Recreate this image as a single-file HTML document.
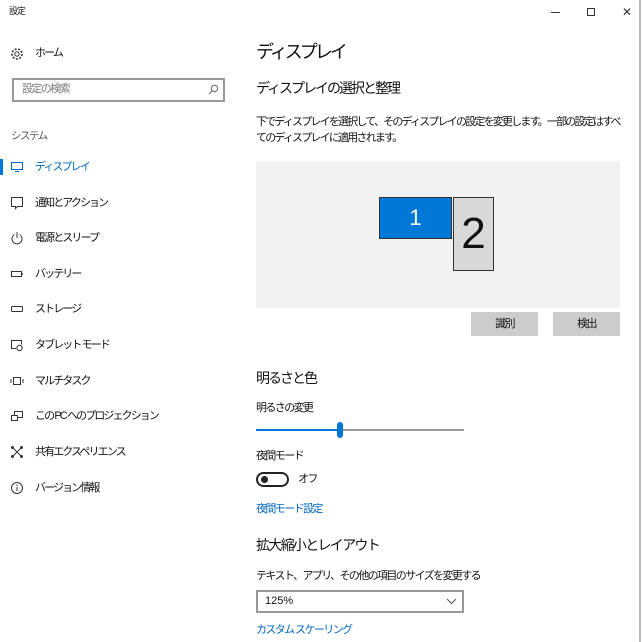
<!DOCTYPE html>
<html><head><meta charset="utf-8"><style>
*{margin:0;padding:0;box-sizing:border-box}
body{width:642px;height:642px;background:#fff;position:relative;overflow:hidden;font-family:"Liberation Sans","Noto Sans CJK JP",sans-serif;color:#111}
.a{position:absolute;white-space:nowrap;line-height:1}
.nav{font-size:11px;left:35px;letter-spacing:-1.9px}
.b{font-size:11px;letter-spacing:-1.6px}
.ic{position:absolute;left:10px;width:14px;height:14px}
.blue{color:#0067c0}
</style></head><body>
<div class="a" style="left:9px;top:7px;font-size:9px;letter-spacing:-1px">設定</div>
<div class="a" style="left:551px;top:12px;width:9px;border-top:1px solid #333"></div>
<div class="a" style="left:587px;top:8px;width:8px;height:8px;border:1px solid #333"></div>
<div class="a" style="left:622px;top:6px;font-size:12px;color:#333">✕</div>
<div class="a" style="left:639px;top:0;width:2px;height:642px;background:#bbb"></div>

<svg class="ic" style="top:47px" viewBox="0 0 14 14"><circle cx="7" cy="7" r="2.2" fill="none" stroke="#333"/><circle cx="7" cy="7" r="5" fill="none" stroke="#333" stroke-dasharray="2 1.5" stroke-width="1.6"/></svg>
<div class="a nav" style="top:48px">ホーム</div>
<div class="a" style="left:12px;top:78px;width:213px;height:24px;border:2px solid #999"></div>
<div class="a b" style="left:22px;top:84px;color:#777">設定の検索</div>
<svg class="a" style="left:208px;top:84px" width="11" height="11" viewBox="0 0 11 11"><circle cx="6.5" cy="4.5" r="3.2" fill="none" stroke="#666"/><line x1="4.2" y1="6.8" x2="1" y2="10" stroke="#666"/></svg>
<div class="a" style="left:11px;top:131px;font-size:10.5px;color:#555;letter-spacing:-1.5px">システム</div>
<div class="a" style="left:0;top:159px;width:3px;height:16px;background:#0078d7"></div>
<svg class="ic" style="top:160px" viewBox="0 0 14 14"><rect x="1.5" y="2.5" width="11" height="7" fill="none" stroke="#0067c0"/><line x1="5" y1="11.5" x2="9" y2="11.5" stroke="#0067c0"/></svg>
<div class="a nav blue" style="top:162px">ディスプレイ</div>
<svg class="ic" style="top:196px" viewBox="0 0 14 14"><path d="M1.5 1.5h11v9h-5l-2 2v-2h-4z" fill="none" stroke="#333"/></svg>
<div class="a nav" style="top:198px">通知とアクション</div>
<svg class="ic" style="top:231px" viewBox="0 0 14 14"><path d="M4.5 3.5a5 5 0 1 0 5 0" fill="none" stroke="#333"/><line x1="7" y1="1" x2="7" y2="7" stroke="#333"/></svg>
<div class="a nav" style="top:233px">電源とスリープ</div>
<svg class="ic" style="top:267px" viewBox="0 0 14 14"><rect x="1.5" y="4.5" width="10" height="5" fill="none" stroke="#333"/><line x1="12" y1="6" x2="12" y2="8" stroke="#333" stroke-width="1.5"/></svg>
<div class="a nav" style="top:269px">バッテリー</div>
<svg class="ic" style="top:302px" viewBox="0 0 14 14"><rect x="1.5" y="4.5" width="11" height="5" rx="1" fill="none" stroke="#333"/></svg>
<div class="a nav" style="top:304px">ストレージ</div>
<svg class="ic" style="top:338px" viewBox="0 0 14 14"><path d="M6 10.5H1.5v-8h10v4" fill="none" stroke="#333"/><circle cx="9.5" cy="10" r="2.7" fill="none" stroke="#333"/></svg>
<div class="a nav" style="top:340px">タブレット モード</div>
<svg class="ic" style="top:374px" viewBox="0 0 14 14"><rect x="3.5" y="3.5" width="7" height="7" fill="none" stroke="#333"/><line x1="1" y1="5" x2="1" y2="9" stroke="#333"/><line x1="13" y1="5" x2="13" y2="9" stroke="#333"/></svg>
<div class="a nav" style="top:376px">マルチタスク</div>
<svg class="ic" style="top:409px" viewBox="0 0 14 14"><rect x="4.5" y="2.5" width="8" height="6" fill="none" stroke="#333"/><rect x="1.5" y="6.5" width="6" height="5" fill="#fff" stroke="#333"/></svg>
<div class="a nav" style="top:411px">この PC へのプロジェクション</div>
<svg class="ic" style="top:445px" viewBox="0 0 14 14"><path d="M3 3l8 8M11 3l-8 8" stroke="#333"/><circle cx="2.5" cy="2.5" r="1.5" fill="#333"/><circle cx="11.5" cy="2.5" r="1.5" fill="#333"/><circle cx="2.5" cy="11.5" r="1.5" fill="#333"/><circle cx="11.5" cy="11.5" r="1.5" fill="#333"/></svg>
<div class="a nav" style="top:447px">共有エクスペリエンス</div>
<svg class="ic" style="top:481px" viewBox="0 0 14 14"><circle cx="7" cy="7" r="5.5" fill="none" stroke="#333"/><line x1="7" y1="6" x2="7" y2="10" stroke="#333"/><circle cx="7" cy="4.2" r=".7" fill="#333"/></svg>
<div class="a nav" style="top:483px">バージョン情報</div>

<div class="a" style="left:256px;top:43px;font-size:18px;letter-spacing:-3px">ディスプレイ</div>
<div class="a" style="left:256px;top:81px;font-size:14px;letter-spacing:-2px">ディスプレイの選択と整理</div>
<div class="a b" style="left:256px;top:114px;line-height:16px;letter-spacing:-1.8px">下でディスプレイを選択して、そのディスプレイの設定を変更します。一部の設定はすべ<br>てのディスプレイに適用されます。</div>
<div class="a" style="left:256px;top:161px;width:364px;height:147px;background:#f2f2f2"></div>
<div class="a" style="left:379px;top:197px;width:73px;height:42px;background:#0078d7;border:1px solid #333;color:#fff;font-size:22px;text-align:center;line-height:40px;font-weight:300">1</div>
<div class="a" style="left:453px;top:197px;width:41px;height:74px;background:#d9d9d9;border:1px solid #333;font-size:44px;text-align:center;line-height:72px">2</div>
<div class="a b" style="left:471px;top:312px;width:67px;height:24px;background:#ccc;text-align:center;line-height:24px">識別</div>
<div class="a b" style="left:553px;top:312px;width:67px;height:24px;background:#ccc;text-align:center;line-height:24px">検出</div>

<div class="a" style="left:256px;top:371px;font-size:14px;letter-spacing:-2px">明るさと色</div>
<div class="a b" style="left:256px;top:403px">明るさの変更</div>
<div class="a" style="left:256px;top:429px;width:84px;height:2px;background:#0078d7"></div>
<div class="a" style="left:340px;top:429px;width:124px;height:2px;background:#999"></div>
<div class="a" style="left:337px;top:422px;width:6px;height:16px;border-radius:3px;background:#0078d7"></div>
<div class="a b" style="left:256px;top:451px">夜間モード</div>
<div class="a" style="left:256px;top:472px;width:33px;height:15px;border:2px solid #222;border-radius:8px"></div>
<div class="a" style="left:261px;top:476px;width:7px;height:7px;border-radius:50%;background:#222"></div>
<div class="a b" style="left:298px;top:474px">オフ</div>
<div class="a b blue" style="left:256px;top:504px">夜間モード設定</div>
<div class="a" style="left:256px;top:538px;font-size:14px;letter-spacing:-1.7px">拡大縮小とレイアウト</div>
<div class="a b" style="left:256px;top:571px">テキスト、アプリ、その他の項目のサイズを変更する</div>
<div class="a" style="left:256px;top:590px;width:208px;height:23px;border:2px solid #999"></div>
<div class="a" style="left:265px;top:596px;font-size:11px">125%</div>
<svg class="a" style="left:446px;top:598px" width="11" height="7" viewBox="0 0 11 7"><path d="M1 1l4.5 4.5L10 1" fill="none" stroke="#555"/></svg>
<div class="a b blue" style="left:256px;top:625px">カスタム スケーリング</div>
</body></html>
